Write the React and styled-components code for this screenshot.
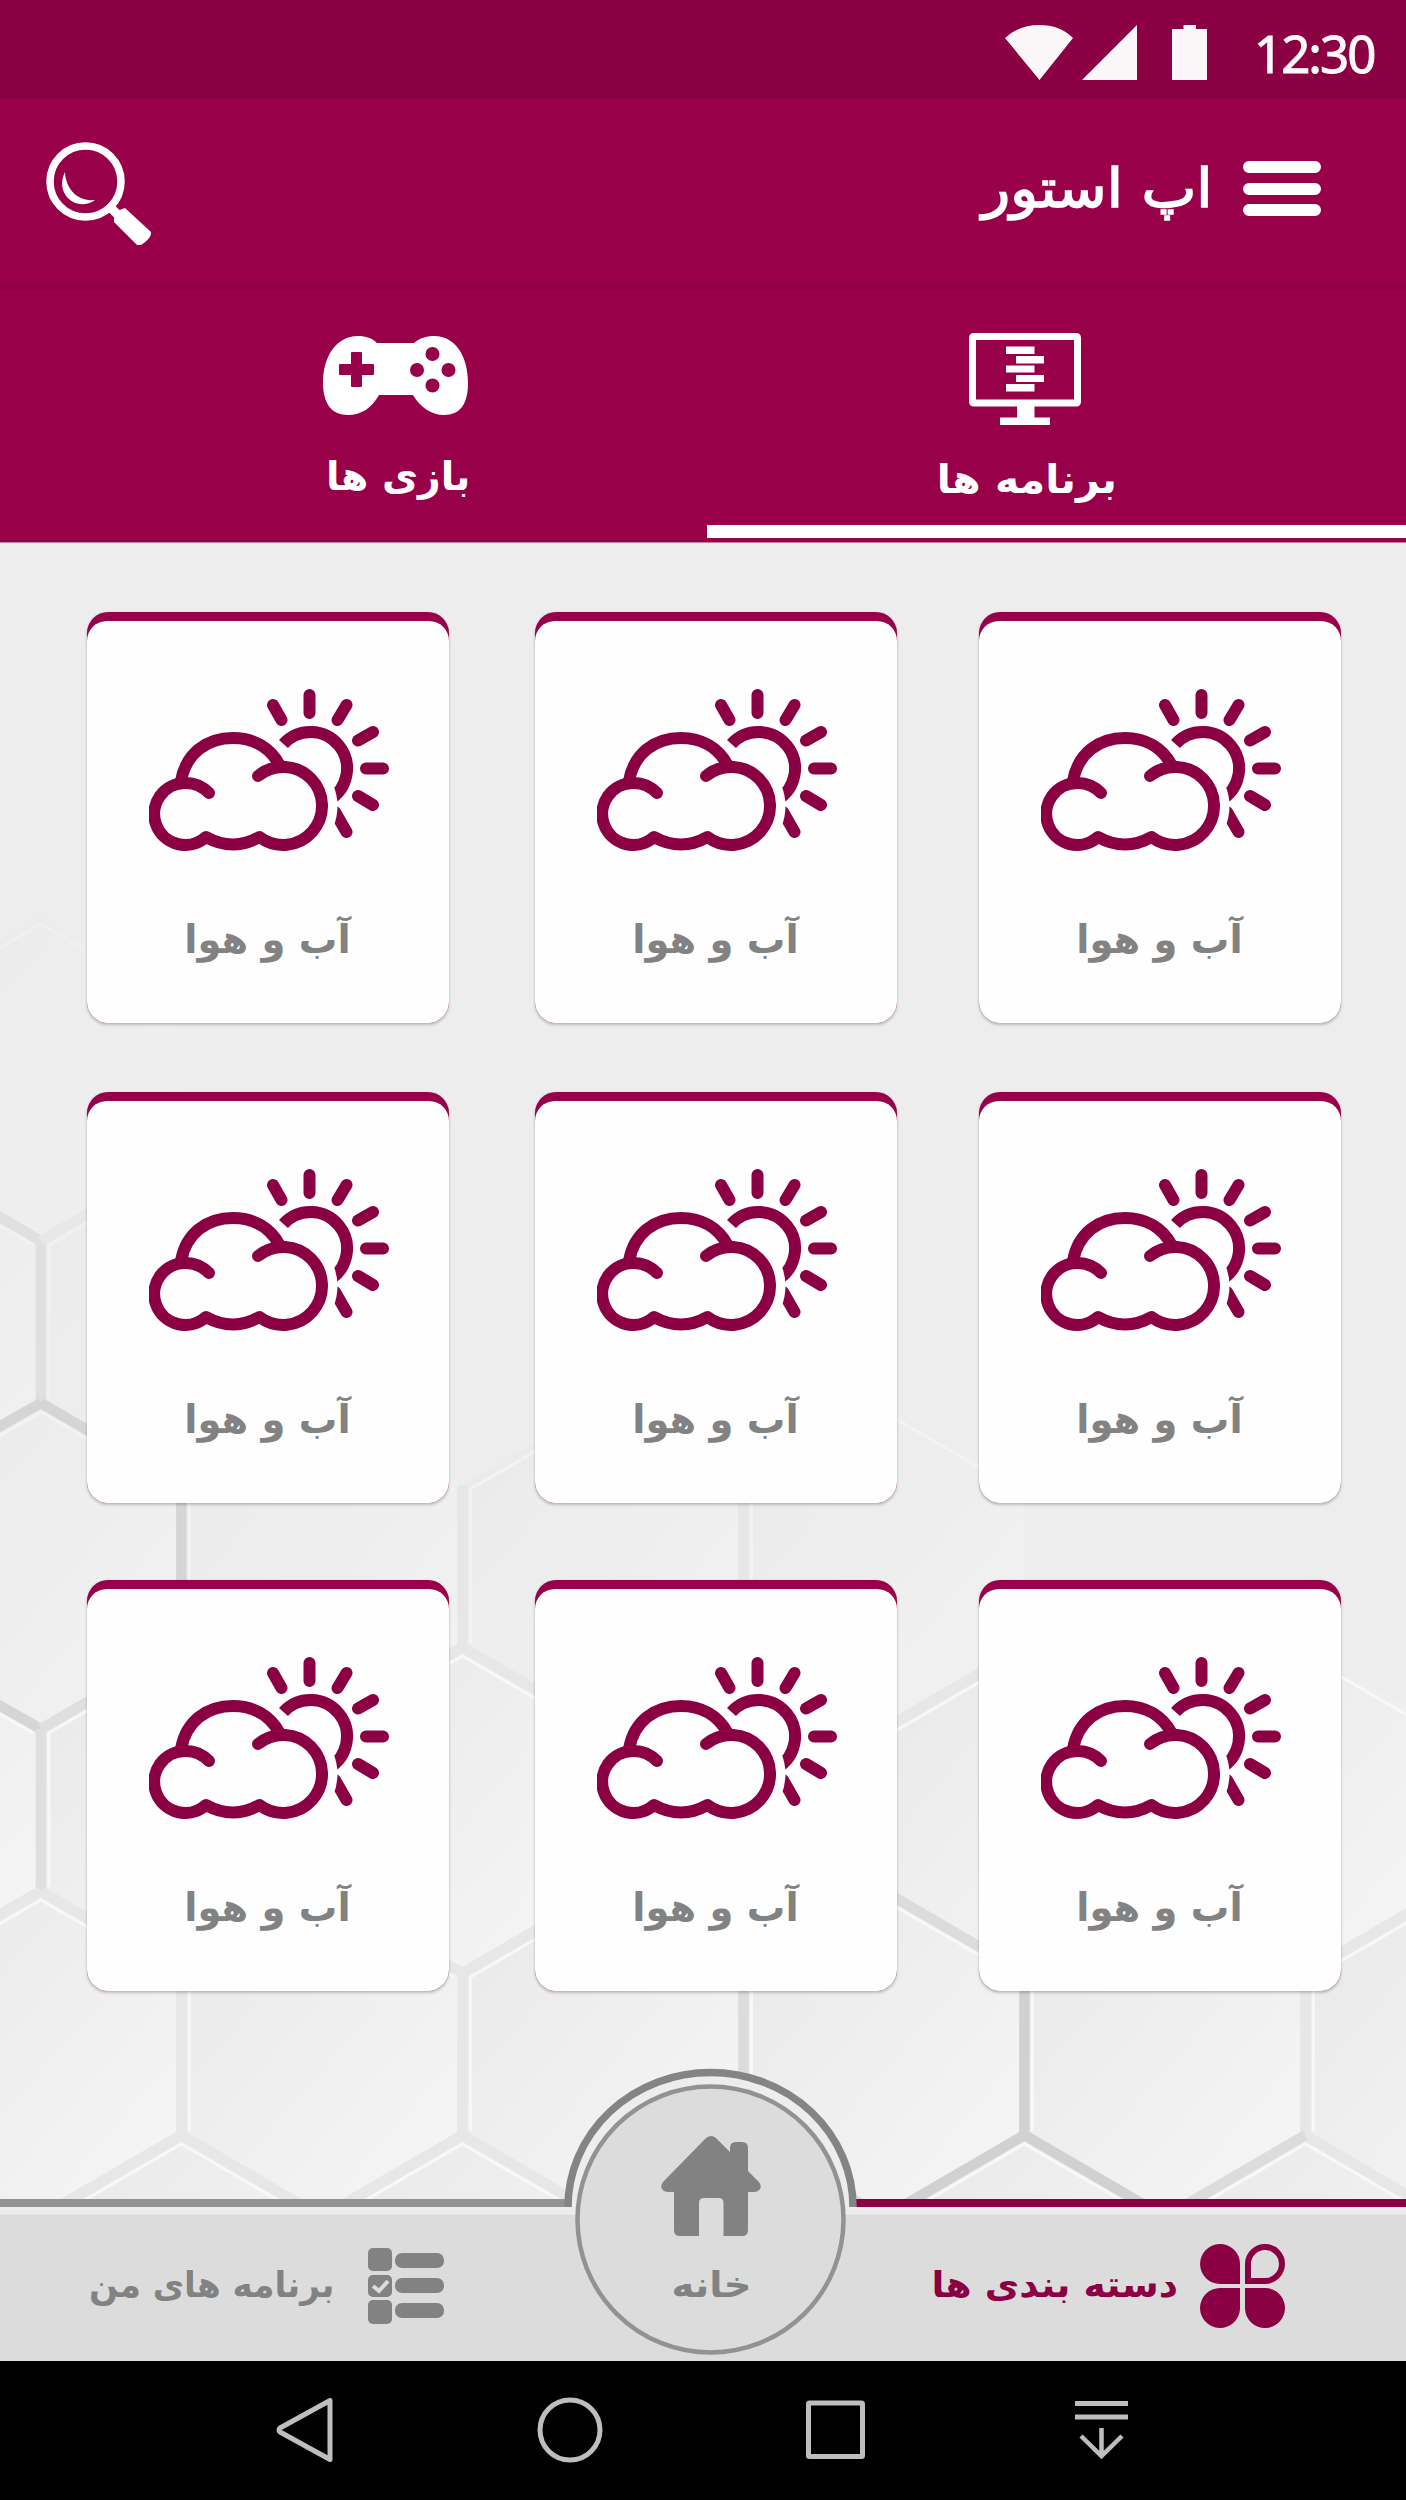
import React from "react";
import styled, { createGlobalStyle } from "styled-components";

const BRAND = "#99004a";
const DEEP = "#8a0043";
const GREY = "#828282";

const GlobalStyle = createGlobalStyle`
  * { box-sizing: border-box; }
  body { margin: 0; background: #ededed; }
`;

const Screen = styled.div`
  width: 1406px;
  height: 2500px;
  display: flex;
  flex-direction: column;
  overflow: hidden;
  font-family: "DejaVu Sans", sans-serif;
`;

const Label = styled.span`
  display: block;
  flex: none;
  direction: rtl;
  white-space: nowrap;
  font-size: ${(p) => p.$size}px;
  line-height: 56px;
  font-weight: ${(p) => (p.$regular ? 400 : 700)};
  color: ${(p) => p.$color || "#fff"};
  -webkit-text-stroke: ${(p) => (p.$regular ? "1.6px currentColor" : "0")};
  transform: translate(${(p) => p.$dx || 0}px, ${(p) => p.$dy || 0}px) scaleX(${(p) => p.$stretch || 1});
  transform-origin: ${(p) => p.$origin || "center"};
`;

const StatusBar = styled.div`
  height: 99px;
  padding: 25px 32px 0 0;
  display: flex;
  justify-content: flex-end;
  background: linear-gradient(${DEEP} 0 96px, #8f0046);
`;

const Clock = styled.span`
  width: 120px;
  margin-left: 46px;
  font: 400 51px/56px "Noto Sans", sans-serif;
  letter-spacing: -2px;
  -webkit-text-stroke: 1px currentColor;
  color: #fdf8fa;
  white-space: nowrap;
`;

const Header = styled.header`
  height: 191px;
  padding: 43px 85px 0 45px;
  display: flex;
  justify-content: space-between;
  background: linear-gradient(${BRAND} 0 185px, #8c0044 188px, #8f0046 190px, ${BRAND});
`;

const HeaderTitle = styled.div`
  display: flex;
  align-items: flex-start;
  gap: 30px;
  padding-top: 19px;
`;

const Tabs = styled.nav`
  height: 253px;
  display: flex;
  background: ${BRAND};
  border-bottom: 1px solid #c77fa3;
`;

const Tab = styled.div`
  width: ${(p) => p.$width}px;
  padding: ${(p) => p.$top}px ${(p) => p.$right || 0}px 0 ${(p) => p.$left || 0}px;
  display: flex;
  flex-direction: column;
  align-items: center;
  position: relative;
`;

const ActiveBar = styled.i`
  position: absolute;
  left: 0;
  right: 0;
  bottom: 4px;
  height: 13px;
  background: #fff;
`;

const TabIcon = styled.div`
  height: ${(p) => p.$height}px;
`;

const Content = styled.main`
  height: 1656px;
  padding: 69px 65px 0 87px;
  position: relative;
  background: #ededed;
  overflow: hidden;
`;

const Honeycomb = styled.svg`
  position: absolute;
  left: 0;
  top: 0;
`;

const Grid = styled.div`
  position: relative;
  display: grid;
  grid-template-columns: 362px 362px 362px;
  grid-template-rows: 411px 411px 411px;
  column-gap: 84px;
  row-gap: 73px;
`;

const Card = styled.article`
  height: 411px;
  width: 362px;
  margin: ${(p) => p.$shiftY}px 0 0 ${(p) => p.$shiftX}px;
  border-radius: 21px;
  background: ${BRAND};
  padding-top: 9px;
  box-shadow: 0 2px 3px rgba(0, 0, 0, 0.2), 0 0 2px rgba(0, 0, 0, 0.12);
  overflow: hidden;
`;

const CardFace = styled.div`
  height: 402px;
  border-radius: 20px 20px 18px 18px;
  background: #fefefe;
  padding: 68px 0 0 2px;
  display: flex;
  flex-direction: column;
  align-items: center;
`;

const CardIcon = styled.div`
  height: 162px;
  margin-bottom: 57px;
`;

const Footer = styled.footer`
  height: 162px;
  display: flex;
  position: relative;
  background: #dcdcdc;
`;

const FooterItem = styled.div`
  width: ${(p) => p.$width}px;
  height: 162px;
  padding: 3px ${(p) => p.$right}px 0 0;
  border-top: 8px solid ${(p) => p.$line};
  display: flex;
  justify-content: flex-end;
  align-items: center;
  gap: ${(p) => p.$gap}px;
  background: linear-gradient(#ededed 0 7px, #dcdcdc 8px);
`;

const HomeButton = styled.div`
  position: absolute;
  left: 561px;
  top: -133px;
  width: 300px;
  height: 293px;
  display: flex;
  flex-direction: column;
  align-items: center;
  padding-top: 70px;
`;

const HomeRing = styled.svg`
  position: absolute;
  left: 0;
  top: 0;
`;

const HomeIcon = styled.svg`
  position: relative;
  margin-bottom: 21px;
`;

const NavBar = styled.div`
  height: 139px;
  padding: 36px 0 0 276px;
  display: grid;
  grid-template-columns: 261px 269px 269px 54px;
  background: #000;
`;

const HEX_ROWS = [
  [1078, 0.3, [41]],
  [1322, 0.45, [-100, 182]],
  [1566, 0.6, [41, 323, 605, 887]],
  [1810, 1, [-100, 182, 464, 746, 1028, 1310]],
  [2054, 1, [41, 323, 605, 887, 1169, 1451]],
  [2298, 1, [-100, 182, 464, 746, 1028, 1310]],
];

const EDGES = [
  ["#e0e0e1", "M41 1241V1403M41 1241L-10 1211"],
  ["#e8e8e8", "M41 1241L182 1159"],
  ["#d5d5d7", "M41 1403L-10 1432M41 1403L182 1485V1647M41 1729L-10 1700"],
  ["#dfdfe0", "M41 1729L182 1647M41 1729V1891"],
  ["#e7e7e7", "M41 1891L-10 1920M41 1891L182 1973V2135L-10 2246M182 2135L323 2217M182 1973L323 1891L464 1973V2135L323 2217M464 2135L605 2217M182 1647L323 1729L464 1647V1485M464 1647L605 1729V1891L464 1973M605 1891L746 1973M605 1729L746 1647V1485M746 1647L887 1729L1028 1647M887 1729V1891L746 1973M1310 1973L1451 1891M1310 1973V2135L1420 2200M1310 1973L1169 1891"],
  ["#dcdcdd", "M746 1973V2135L605 2217M746 2135L887 2217M1310 2135L1169 2217M887 1891L1028 1973"],
  ["#d1d1d4", "M1028 1973V2135L887 2217M1028 2135L1169 2217"],
];

function Background() {
  return (
    <Honeycomb width="1406" height="1656" viewBox="0 543 1406 1656">
      <defs>
        <linearGradient id="cell" x1="0.1" y1="0.1" x2="0.9" y2="0.9">
          <stop offset="0" stopColor="#eaeaea" />
          <stop offset="1" stopColor="#f5f5f5" />
        </linearGradient>
      </defs>
      <g transform="scale(0.9965 1)">
        {HEX_ROWS.map(([cy, opacity, xs]) =>
          xs.map((cx) => (
            <g key={`${cx}-${cy}`} transform={`translate(${cx} ${cy})`} opacity={opacity}>
              <path d="M0-163L141-81V81L0 163L-141 81V-81Z" fill="url(#cell)" />
              <path d="M-133 77V-77L0-154L133-77" fill="none" stroke="#f8f8f8" strokeWidth="3" />
            </g>
          ))
        )}
        {EDGES.map(([stroke, d], i) => (
          <path key={i} d={d} fill="none" stroke={stroke} strokeWidth="10.5" />
        ))}
      </g>
    </Honeycomb>
  );
}

function Weather() {
  return (
    <svg width="240" height="162" viewBox="0 0 240 162" fill="none" stroke={DEEP} strokeWidth="12" strokeLinecap="round">
      <path d="M134.500 55A36.500 36.500 0 1 1 180 111" strokeLinecap="butt" />
      <path d="M160.500 6V24M124 16L132.500 31M197.500 16L188.500 31M224 43L209 51.500M217 79.500H234M209 107L224 116M197.500 143L186 123" />
      <circle cx="134" cy="117" r="54.500" fill="#fefefe" stroke="none" />
      <path d="M60 104C53 97 46 94 37 94A31 31 0 1 0 57 148Q84 163 110.500 148A39 39 0 1 0 109 87" strokeLinejoin="round" />
      <path d="M32 92C37 64 58 49 84 49C105 49 121 59 130 75" strokeLinecap="butt" />
    </svg>
  );
}

function Search() {
  return (
    <svg width="107" height="104" viewBox="0 0 107 104" fill="none">
      <circle cx="40.500" cy="39.500" r="35.500" stroke="#fff" strokeWidth="7.500" />
      <path d="M20 30C9 52 32 71 50 58C38 59 28 54 23 43C21 38 20 34 20 30Z" fill="#fff" />
      <path d="M64 64L72 72" stroke="#fff" strokeWidth="9" />
      <path d="M69 70L80 66L106 90Q107 96 96 103H92L69 80Z" fill="#fff" />
    </svg>
  );
}

function Gamepad() {
  return (
    <svg width="146" height="80" viewBox="0 0 146 80">
      <path fill="#fff" d="M35 0C43 0 49 2 54 7H91C97 2 103 0 111 0C133 0 145 21 145 47C145 68 137 79 121 79C108 79 97 71 90 59H56C49 72 38 79 25 79C9 79 0 68 0 47C0 21 13 0 35 0Z" />
      <path fill={BRAND} d="M29 16H38Q39 16 39 17V28H50Q51 28 51 29V38Q51 39 50 39H39V50Q39 51 38 51H29Q28 51 28 50V39H17Q16 39 16 38V29Q16 28 17 28H28V17Q28 16 29 16Z" />
      <g fill={BRAND}>
        <circle cx="109.500" cy="18" r="7" />
        <circle cx="94" cy="34" r="7" />
        <circle cx="125.500" cy="34" r="7" />
        <circle cx="109.500" cy="49.500" r="7" />
      </g>
    </svg>
  );
}

function Monitor() {
  return (
    <svg width="112" height="92" viewBox="0 0 112 92">
      <rect x="3.500" y="3.500" width="105" height="66.500" rx="1" fill="none" stroke="#fff" strokeWidth="7" />
      <path fill="#fff" d="M37 13.500h28.500v7.500H37zM47 23h28v7.500H47zM37 32.500h28.500v7H37zM47 42h28v7H47zM37 51h28.500v7.500H37zM48 70h17.500v14.500H81V92H31v-7.500h17z" />
    </svg>
  );
}

const CARDS = [0, 1, 2].flatMap((row) => [0, 1, 2].map((col) => ({ row, col })));
const SHIFT_X = [0, 2, 0];
const SHIFT_Y = [0, -4, 0];

export default function App() {
  return (
    <Screen>
      <GlobalStyle />
      <StatusBar>
        <svg width="203" height="56" viewBox="0 0 203 56" fill="#fbf7f9">
          <path d="M0 13Q14 0 34.500 0T68 13L34.500 55ZM132 0V55H77ZM167 4H178.500V0H191V4H202V55H167Z" />
        </svg>
        <Clock>12:30</Clock>
      </StatusBar>
      <Header>
        <Search />
        <HeaderTitle>
          <Label $size={54} $regular $dy={0} $stretch={1.08} $origin="right">اپ استور</Label>
          <svg width="78" height="56" viewBox="0 0 78 56" stroke="#fff" strokeWidth="12" strokeLinecap="round">
            <path d="M6 6H72M6 28H72M6 49H72" />
          </svg>
        </HeaderTitle>
      </Header>
      <Tabs>
        <Tab $width={707} $top={46} $left={84}>
          <TabIcon $height={106}><Gamepad /></TabIcon>
          <Label $size={40} $dx={3} $dy={6} $stretch={0.985}>بازی ها</Label>
        </Tab>
        <Tab $width={699} $top={43} $right={63}>
          <TabIcon $height={113}><Monitor /></TabIcon>
          <Label $size={40} $dx={2} $dy={5} $stretch={1.025}>برنامه ها</Label>
          <ActiveBar />
        </Tab>
      </Tabs>
      <Content>
        <Background />
        <Grid>
          {CARDS.map(({ row, col }) => (
            <Card key={`${row}-${col}`} $shiftX={SHIFT_X[col]} $shiftY={SHIFT_Y[row]}>
              <CardFace>
                <CardIcon><Weather /></CardIcon>
                <Label $size={39} $color={GREY} $dx={-2} $dy={4} $stretch={0.985}>آب و هوا</Label>
              </CardFace>
            </Card>
          ))}
        </Grid>
      </Content>
      <Footer>
        <FooterItem $width={711} $right={267} $gap={34} $line="#939393">
          <Label $size={36} $color={GREY} $dy={-1} $stretch={0.95} $origin="right">برنامه های من</Label>
          <svg width="76" height="76" viewBox="0 0 76 76" fill={GREY}>
            <rect width="24" height="23" rx="5" />
            <rect y="27" width="24" height="22" rx="5" />
            <rect y="52" width="24" height="24" rx="5" />
            <rect x="27" y="5" width="49" height="15" rx="7" />
            <rect x="27" y="30" width="49" height="15" rx="7" />
            <rect x="27" y="55" width="49" height="15" rx="7" />
            <path d="M5 38L11 43L20 33" fill="none" stroke="#dcdcdc" strokeWidth="4" />
          </svg>
        </FooterItem>
        <FooterItem $width={695} $right={121} $gap={22} $line={DEEP}>
          <Label $size={36} $color={DEEP} $dy={-1} $stretch={1.045} $origin="right">دسته بندی ها</Label>
          <svg width="85" height="86" viewBox="0 0 85 86" fill={DEEP}>
            <path d="M40 41V20A20 20 0 1 0 20 41ZM40 45V66A20 20 0 1 1 20 45ZM45 45V66A20 20 0 1 0 65 45Z" />
            <path d="M48 38V20A17 17 0 1 1 65 38Z" fill="none" stroke={DEEP} strokeWidth="6" />
          </svg>
        </FooterItem>
        <HomeButton>
          <HomeRing width="300" height="293" viewBox="0 0 300 293">
            <path d="M7 148V140.500A142.500 134 0 0 1 292 140.500V148Z" fill="#ededed" />
            <path d="M7 141A142.500 134.500 0 0 1 292 141" fill="none" stroke="#848484" strokeWidth="7.500" />
            <circle cx="149.500" cy="153.500" r="133" fill="#dcdcdc" stroke="#929292" strokeWidth="4.500" />
          </HomeRing>
          <HomeIcon width="100" height="100" viewBox="0 0 100 100" fill={GREY}>
            <path d="M45 2Q50-2 55 2L69 16V12Q69 6 75 6H81Q87 6 87 12V35L98 46Q101 50 99 53Q97 56 93 56H87V94Q87 100 81 100H62.500V67Q62.500 62 57.500 62H43Q38 62 38 67V100H19Q13 100 13 94V56H7Q3 56 1 53Q-1 50 2 46Z" />
          </HomeIcon>
          <Label $size={36} $color={GREY} $stretch={1.07}>خانه</Label>
        </HomeButton>
      </Footer>
      <NavBar>
        <svg width="58" height="66" viewBox="0 0 58 66" fill="none" stroke="#bebebe" strokeWidth="5" strokeLinejoin="round">
          <path d="M54 3.500V62.500L4 35Q2 33 4 31Z" />
        </svg>
        <svg width="66" height="66" viewBox="0 0 66 66" fill="none" stroke="#bebebe" strokeWidth="5">
          <circle cx="33" cy="33" r="30" />
        </svg>
        <svg width="60" height="66" viewBox="0 0 60 66" fill="none" stroke="#bebebe" strokeWidth="5">
          <rect x="2.500" y="6" width="54" height="53.500" rx="1" />
        </svg>
        <svg width="54" height="66" viewBox="0 0 54 66" fill="none" stroke="#bebebe" strokeWidth="4.500">
          <path d="M0 6.500H53M0 20H53" strokeWidth="5" />
          <path d="M26.500 31V58M6 39L26.500 59L47 39" />
        </svg>
      </NavBar>
    </Screen>
  );
}
